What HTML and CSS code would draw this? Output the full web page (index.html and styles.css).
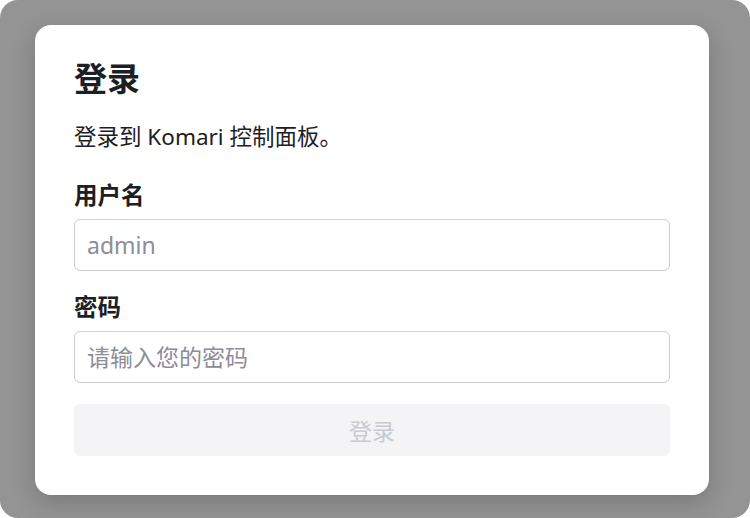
FILE: index.html
```html
<!DOCTYPE html>
<html lang="zh-CN">
<head>
<meta charset="utf-8">
<title>登录</title>
<link rel="stylesheet" href="styles.css">
</head>
<body>
<div class="overlay">
  <div class="card">
    <h1 class="title">登录</h1>
    <p class="desc">登录到 Komari 控制面板。</p>
    <form class="form">
      <label class="label" for="u">用户名</label>
      <input class="input" id="u" type="text" placeholder="admin">
      <label class="label second" for="p">密码</label>
      <input class="input" id="p" type="password" placeholder="请输入您的密码">
      <button class="btn" type="button" disabled>登录</button>
    </form>
  </div>
</div>
</body>
</html>
```

FILE: styles.css
```css
html, body {
  margin: 0;
  padding: 0;
  background: #ffffff;
  width: 750px;
  height: 518px;
  overflow: hidden;
}
body {
  font-family: "Noto Sans", "Noto Sans CJK SC", sans-serif;
  color: #1c2024;
}
.overlay {
  width: 750px;
  height: 518px;
  box-sizing: border-box;
  background: #949494;
  border-radius: 18px;
  padding: 25px 41px 23px 35px;
}
.card {
  background: #ffffff;
  border-radius: 16px;
  width: 674px;
  height: 470px;
  box-sizing: border-box;
  padding: 36px 39px 39px 39px;
  box-shadow: 0 8px 24px rgba(0, 0, 0, 0.18);
  display: flex;
  flex-direction: column;
}
.title {
  margin: 0;
  font-size: 33px;
  line-height: 36px;
  font-weight: 700;
  color: #1c2024;
}
.desc {
  margin: 25px 0 0 0;
  font-size: 22.5px;
  line-height: 30px;
  color: #1c2024;
}
.form {
  display: flex;
  flex-direction: column;
  margin-top: 28px;
}
.label {
  font-size: 23.5px;
  line-height: 30px;
  font-weight: 700;
  color: #1c2024;
}
.label.second {
  margin-top: 21px;
}
.input {
  margin-top: 9px;
  height: 52px;
  box-sizing: border-box;
  border: 1px solid #cdced6;
  border-radius: 6px;
  padding: 0 12px;
  font-family: "Noto Sans", "Noto Sans CJK SC", sans-serif;
  font-size: 23px;
  color: #1c2024;
  background: #ffffff;
  outline: none;
}
.input::placeholder {
  color: #8b8d98;
}
.btn {
  margin-top: 21px;
  height: 52px;
  border: none;
  border-radius: 6px;
  background: #f4f4f6;
  color: #c9cad1;
  font-family: "Noto Sans", "Noto Sans CJK SC", sans-serif;
  font-size: 23px;
}
```
